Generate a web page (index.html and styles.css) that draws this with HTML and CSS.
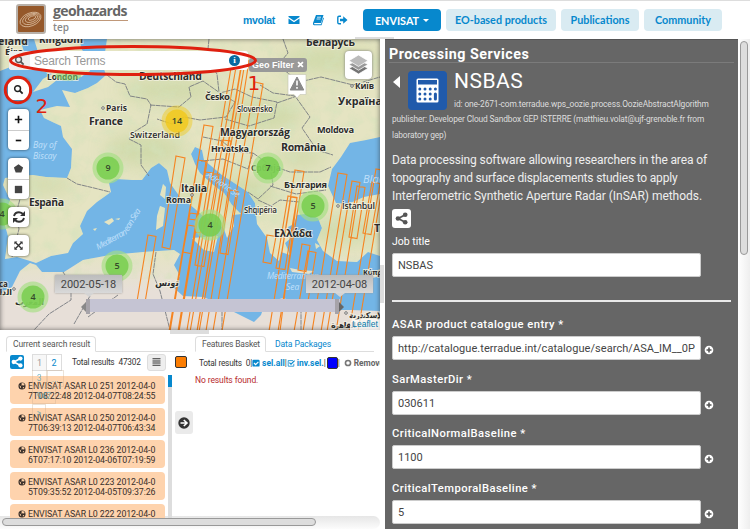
FILE: index.html
```html
<!DOCTYPE html>
<html lang="en">
<head>
<meta charset="utf-8">
<title>Geohazards TEP</title>
<link rel="stylesheet" href="styles.css">
</head>
<body>
<svg class="defs" width="0" height="0">
  <symbol id="plus" viewBox="0 0 12 12"><circle cx="6" cy="6" r="5.2" fill="#fff"/><path d="M6 3v6M3 6h6" stroke="#555" stroke-width="1.9"/></symbol>
  <symbol id="globe" viewBox="0 0 12 12"><circle cx="6" cy="6" r="5.3" fill="#3a302b"/><path d="M5.5 1.5l3 .4 1.6 2.5-1.5 1-2-.6-1.300 1zM2.200 5l2 1.500.6 2.800-1.600-1.200zM7.500 7.500l2 .2-1.400 2-1-.4z" fill="#fdd0a6"/></symbol>
  <symbol id="share" viewBox="0 0 14 14"><path d="M11 3L3.500 7l7.500 4" fill="none" stroke="currentColor" stroke-width="1.900"/><circle cx="11" cy="3" r="2.500" fill="currentColor"/><circle cx="3.200" cy="7" r="2.500" fill="currentColor"/><circle cx="11" cy="11" r="2.500" fill="currentColor"/></symbol>
  <symbol id="lens" viewBox="0 0 12 12"><circle cx="5" cy="5" r="3.200" fill="none" stroke="currentColor" stroke-width="1.600"/><path d="M7.300 7.300L10.500 10.500" stroke="currentColor" stroke-width="2"/></symbol>
</svg>

<header class="top">
  <div class="brand">
    <svg class="logo" viewBox="0 0 30 30"><rect x="1" y="1" width="28" height="28" rx="2" fill="#95582a" stroke="#b8b1aa" stroke-width="2"/><g fill="none" stroke="#e2c7ad" stroke-width=".7"><ellipse cx="14.500" cy="15.500" rx="11" ry="6.500" transform="rotate(-22 14.500 15.500)"/><ellipse cx="15" cy="15" rx="8.800" ry="4.900" transform="rotate(-22 15 15)"/><ellipse cx="15.500" cy="14.500" rx="6.500" ry="3.400" transform="rotate(-22 15.500 14.500)"/><ellipse cx="16" cy="14" rx="4" ry="1.800" transform="rotate(-22 16 14)"/></g></svg>
    <div class="brand-text"><span class="brand-name">geohazards</span><span class="brand-sub">tep</span></div>
  </div>
  <div class="user">
    <span class="user-name">mvolat</span>
    <svg viewBox="0 0 12 12"><path d="M.5 2h11v1L6 6.800.5 3zM.5 4.500L6 8.200l5.500-3.700V10H.5z" fill="#0788cd"/></svg>
    <svg viewBox="0 0 12 12"><path d="M4 1h7.500L9 9H2.500q-1 .8 0 1.200H9L11.300 3.500l.6.800L9.500 11.300H2Q.5 11 1 9z" fill="#0788cd"/><path d="M5 3.200h4M4.500 5h4" stroke="#fff" stroke-width=".8"/></svg>
    <svg viewBox="0 0 12 12"><path d="M5 2.200H3Q1.800 2.200 1.800 3.500v5Q1.800 9.800 3 9.800h2" fill="none" stroke="#0788cd" stroke-width="1.400"/><path d="M4 4.700h3.200V2.200L11.500 6 7.200 9.800V7.300H4z" fill="#0788cd"/></svg>
  </div>
  <nav class="nav">
    <a class="pill pill-on"><span>ENVISAT</span><i class="caret"></i></a>
    <a class="pill p2">EO-based products</a>
    <a class="pill p3">Publications</a>
    <a class="pill p4">Community</a>
  </nav>
  <i class="handle-top"></i>
</header>

<main class="main">
  <div class="left">
    <section class="map">
      <svg class="map-svg" viewBox="0 39 380 291">
        <defs>
          <filter id="relief" x="0" y="0" width="100%" height="100%"><feTurbulence type="fractalNoise" baseFrequency=".07" numOctaves="4" seed="8"/><feColorMatrix values="0 0 0 0 .66  0 0 0 0 .76  0 0 0 0 .50  2.400 0 0 0 -1.050"/><feComposite in2="SourceGraphic" operator="in"/></filter>
          <filter id="soft"><feGaussianBlur stdDeviation="9"/></filter>
          <clipPath id="land"><use href="#coast"/></clipPath>
          <linearGradient id="ground" gradientUnits="userSpaceOnUse" x1="0" y1="250" x2="0" y2="292"><stop offset="0" stop-color="#e5e4c2"/><stop offset="1" stop-color="#e7dfd8"/></linearGradient>
        </defs>
        <rect y="39" width="380" height="291" fill="#73b5e6"/>
        <path id="coast" fill="url(#ground)" d="M0 39H20L24 52 13 66 0 71ZM34 39H79L82 50 91 58 90 71 81 77 70 79 57 80 48 87 33 92 43 79 52 74 35 69 42 60 38 52ZM107 39H380V137L366 140 350 143 341 157 332 169 328 186 336 203 348 204 364 197 380 194V256L368 252 357 262 337 261 323 251 317 240 322 228 318 218 305 214 297 215 294 224 288 227 291 238 285 243 290 255 281 252 279 261 270 253 267 238 257 224 255 203 248 192 222 175 204 160 202 150 195 147 191 154 195 164 200 173 212 184 224 193 232 205 241 214 232 215 234 226 227 238 224 229 216 222 203 216 194 208 180 197 170 183 167 170 159 163 151 168 142 180 132 180 116 179 109 183 111 192 97 202 87 211 80 226 83 234 73 243 68 253 51 256 36 263 30 261 17 257 5 259 8 236 3 219 10 200 3 185 5 178 20 176 33 175 46 177 67 178 71 168 72 149 63 137 61 126 44 118 40 110 57 106 70 107 62 90 75 93 88 88 97 83 106 75 103 66ZM0 293L12 287 20 271 30 263 36 265 42 272 64 272 83 260 110 255 143 252 174 250 180 254 174 265 180 276 173 287 183 296 203 297 216 302 234 312 254 322 261 315 265 303 283 298 300 303 330 310 350 310 380 311V330H0ZM163 184L166 187 165 199 160 195ZM160 206L165 208 163 226 156 230 157 216ZM192 238L218 236 214 252 204 250ZM290 268L300 270 314 271 309 274 292 272ZM104 222L112 218 114 221 109 225ZM115 219L120 218 119 220ZM93 229L97 228 95 231ZM300 230L307 233 302 236ZM366 275L380 269V276L369 279ZM315 243L320 246 316 249Z"/>
        <g clip-path="url(#land)">
          <g filter="url(#soft)" fill="#c7d5a0" opacity=".7"><ellipse cx="145" cy="150" rx="40" ry="16"/><ellipse cx="258" cy="115" rx="45" ry="17"/><ellipse cx="245" cy="193" rx="30" ry="18"/><ellipse cx="40" cy="185" rx="35" ry="8"/><ellipse cx="300" cy="157" rx="25" ry="10"/><ellipse cx="345" cy="230" rx="40" ry="12"/><ellipse cx="170" cy="90" rx="50" ry="12"/><ellipse cx="330" cy="60" rx="50" ry="13"/><ellipse cx="190" cy="190" rx="8" ry="20"/></g>
          <rect y="39" width="380" height="240" filter="url(#relief)" opacity=".6"/>
        </g>
        <g fill="none" stroke="#777b80" stroke-width=".9" stroke-dasharray="5 .6">
          <path d="M107 75l9 7 9 2 5 12 17 3 4 6-4 19-13 8-5 7 12 6 0 20 8 11M67 178l10 6 17 4 16 4M13 186l10 2-3 11-4 15 3 15-7 28M150 105l29 2 12-10-2-10 14-6 17 12 15 9-9 15-26 3-16-3-12 7-15-5M220 93l15-4 17 8 25 5-3 16-25 8-24-7M209 39l-2 20 10 15 2 18M260 85l13 8 22 3 15 21-8 11 15 22 16 5M277 103l20-7M203 137l19 4 13 11 18 1-5 16-25-10-22 2M253 153l17 12 3 20-15 14-10-7M270 165l20 7 30 0 11-5M270 186l26 8 30-4M258 200l13 6 9-6 19 2M156 252l-3 22 7 17 10 39M63 272l8 12 0 16-22 14-15 16M90 296l-16 28M118 295l-30 22M222 300v30M301 303v27M283 39l5 14-10 12 21 17 22-5 32 8 27-8"/>
        </g>
        <g class="strips">
          <path d="M176 156l9 2-15 91-8-2zM148 235l8 1.500-11 66-8-1zM232 62l10 1-45 269-10-2zM236 67l8 1-45 264h-9zM242 60l7 1-43 270h-9zM255 82l8 2-41 247h-9zM204 125l9 1.500-34 205h-9zM198 160l8 1.500-28 170h-9zM210 173l9 1.500-15 92-9-1.500zM230 190l8 1.500-10 63-8-1.500zM295 170l9 1.500-26 160h-9zM288 196l9 1.500-12 72-9-1.500zM291 197l6 1-17 133h-11zM267 235l9 1.500-5 27-8-1.500zM302 244l8 1.500-4 26-8-1.500zM308 251l8 1.500-13 79h-9zM338 173l9 1.500-26 157h-9zM352 181l8 1.500-24 149h-9zM357 186l8 1.500-8 51-8-1.500zM372 182l8 1.500-9 51-8-1.500zM376 169l9 1.500-27 161h-9zM188 225l8 1.500-5 27-8-1.500zM190 213l7 1-1 6-7-1zM222 140l9 1-1 6-9-1zM205 172l8 1-10 60-8-1z"/>
        </g>
        <g class="lbl halo">
          <text x="-2" y="45" textLength="30" font-size="10.500">eland</text><text x="39" y="43" textLength="44" font-size="10">Kingdom</text>
          <text x="5" y="55" textLength="18" font-size="9.500">Éire</text>
          <text x="47" y="80" textLength="31" font-size="8.500">London</text>
          <text x="139" y="80" textLength="63" font-size="10.500">Deutschland</text>
          <text x="306" y="46" textLength="49" font-size="10.500">Беларусь</text>
          <text x="205" y="100" textLength="25" font-size="9.500">Česko</text>
          <text x="237" y="112" textLength="36" font-size="8" class="thin">Slovensko</text>
          <text x="106" y="111" textLength="21" font-size="8.500">Paris</text>
          <text x="89" y="125" textLength="34" font-size="10.500">France</text>
          <text x="130" y="138" textLength="50" font-size="9" class="thin">Switzerland</text>
          <text x="355" y="89" textLength="19" font-size="8.500">Київ</text>
          <text x="338" y="105" textLength="44" font-size="10.800">Україна</text>
          <text x="220" y="136" textLength="70" font-size="10.500">Magyarország</text>
          <text x="317" y="133" textLength="37" font-size="9.300">Moldova</text>
          <text x="211" y="152" textLength="38" font-size="9">Hrvatska</text>
          <text x="281" y="151" textLength="45" font-size="10.800">România</text>
          <text x="251" y="171" textLength="30" font-size="8.500">Србија</text>
          <text x="284" y="188" textLength="43" font-size="9.300">България</text>
          <text x="181" y="192" textLength="26" font-size="10.500">Italia</text>
          <text x="166" y="203" textLength="25" font-size="8.800">Roma</text>
          <text x="29" y="206" textLength="35" font-size="10.500">España</text>
          <text x="244" y="213" textLength="33" font-size="8" class="thin">Shqipëria</text>
          <text x="342" y="209" textLength="33" font-size="9" class="thin">İstanbul</text>
          <text x="274" y="237" textLength="38" font-size="10.800">Ελλάδα</text>
          <text x="374" y="232" font-size="11">Türkiye</text>
          <text x="363" y="275" textLength="27" font-size="7.500">Κύπρος</text>
          <text x="155" y="286" textLength="24" font-size="9">تونس</text>
          <text x="15" y="305" textLength="29" font-size="9">المغرب</text>
          <text x="-1" y="287" font-size="8">ca</text><text x="-5" y="295" font-size="8" textLength="17">الدار</text>
          <text x="349" y="318" textLength="36" font-size="8">الإسكندرية</text>
          <text x="331" y="328" textLength="25" font-size="8">القاهرة</text>
        </g>
        <g class="sea"><text x="33" y="148">Bay of</text><text x="33" y="159">Biscay</text><text transform="translate(98 250) rotate(-29)" textLength="34">Mediterran</text><text transform="translate(128 232) rotate(-59)" textLength="25">ean Sea</text><text transform="translate(206 176) rotate(35)" textLength="38">Adriatic Se</text><text x="267" y="279" textLength="52">Mediterranean</text><text x="286" y="290">Sea</text><text x="363" y="183" class="black">Black</text></g>
        <g fill="#fff" stroke="#555" stroke-width=".8"><circle cx="103" cy="108" r="1.300"/><circle cx="352" cy="86" r="1.300"/><circle cx="338" cy="206" r="1.300"/><circle cx="14" cy="289" r="1.300"/><circle cx="346" cy="313" r="1.300"/><circle cx="192" cy="195" r="1.300"/></g>
        <ellipse cx="68" cy="76" rx="13" ry="4.500" fill="#87db6d" opacity=".55"/>
        <g class="cluster"><circle class="halo-c" cx="108" cy="168" r="15.500"/><circle cx="108" cy="168" r="11.500"/><circle class="halo-c" cx="117" cy="266" r="15.500"/><circle cx="117" cy="266" r="11.500"/><circle class="halo-c" cx="33" cy="297" r="15.500"/><circle cx="33" cy="297" r="11.500"/><circle class="halo-c" cx="2" cy="214" r="15.500"/><circle cx="2" cy="214" r="11.500"/><circle class="halo-c" cx="210" cy="225" r="15.500"/><circle cx="210" cy="225" r="11.500"/><circle class="halo-c" cx="268" cy="168" r="15.500"/><circle cx="268" cy="168" r="11.500"/><circle class="halo-c" cx="313" cy="206" r="15.500"/><circle cx="313" cy="206" r="11.500"/>
          <g fill="#f1c91f"><circle cx="177" cy="121" r="15.500" opacity=".55"/><circle cx="177" cy="121" r="11.500"/></g></g>
        <g class="count"><text x="108" y="171">9</text><text x="117" y="269">5</text><text x="33" y="300">4</text><text x="2" y="217">4</text><text x="210" y="228">4</text><text x="268" y="171">7</text><text x="313" y="209">5</text><text x="177" y="124">14</text></g>
      </svg>
      <i class="shade"></i>

      <div class="search"><span class="search-icon"><svg viewBox="0 0 12 12"><use href="#lens"/></svg></span><span class="search-text">Search Terms</span><span class="search-info"><b>i</b></span></div>
      <span class="geo">Geo Filter <svg viewBox="0 0 8 8"><path d="M1.200 1.200l5.600 5.600M6.800 1.200L1.200 6.800" stroke="#fff" stroke-width="2"/></svg></span>
      <div class="layers"><svg viewBox="0 0 22 22"><g stroke="#fff" stroke-width=".8"><path d="M1 15l10-5 10 5-10 6z" fill="#747474"/><path d="M1 11l10-5 10 5-10 6z" fill="#999"/><path d="M1 7l10-6 10 6-10 6z" fill="#bbb"/></g></svg></div>
      <svg class="warn" viewBox="0 0 20 25"><path d="M1 .5h18v20h-6l-3 3.500-3-3.500H1z" fill="#fff" stroke="#c4c4b4" stroke-width=".6"/><path d="M10 3L16.800 16H3.200z" fill="#888" stroke="#888" stroke-width="1" stroke-linejoin="round"/><path d="M10 6.500v5M10 13v1.800" stroke="#fff" stroke-width="1.600"/></svg>

      <div class="tools">
        <div class="tool-set"><span><svg viewBox="0 0 12 12"><use href="#lens"/></svg></span></div>
        <div class="tool-set"><span><svg viewBox="0 0 12 12"><path d="M6 2v8M2 6h8" stroke="#111" stroke-width="1.800"/></svg></span><span><svg viewBox="0 0 12 12"><path d="M3 6h6" stroke="#111" stroke-width="1.800"/></svg></span></div>
        <div class="tool-set"><span><svg viewBox="0 0 12 12"><path d="M6 1.300l5 3.600-1.900 5.400H2.900L1 4.900z" fill="#444"/></svg></span><span><svg viewBox="0 0 12 12"><path d="M2 2h8v8H2z" fill="#444"/></svg></span></div>
        <div class="tool-set"><span><svg class="big" viewBox="0 0 14 14"><g fill="none" stroke="#333" stroke-width="1.900"><path d="M2 6Q3 2.300 7 2.300 9.500 2.300 11.500 4.500M12 8Q11 11.700 7 11.700 4.500 11.700 2.500 9.500"/></g><path d="M13 1v5H8zM1 13V8h5z" fill="#333"/></svg></span></div>
        <div class="tool-set"><span><svg viewBox="0 0 12 12"><path d="M3 3l6 6M9 3L3 9" stroke="#333" stroke-width="1.500"/><path d="M1.500 1.500h3.300L1.500 4.800zM10.500 1.500v3.300L7.200 1.500zM1.500 10.500V7.200l3.300 3.300zM10.500 10.500H7.200l3.300-3.300z" fill="#333"/></svg></span></div>
      </div>

      <div class="timeline"><i class="bar"></i><i class="grip gl"></i><i class="grip gr"></i></div>
      <span class="date d1">2002-05-18</span>
      <span class="date d2">2012-04-08</span>
      <span class="leaflet">Leaflet</span>

      <svg class="marks" viewBox="0 39 380 291"><g fill="none" stroke="#df200f"><ellipse cx="133" cy="60.500" rx="122.500" ry="14" stroke-width="3"/><circle cx="18" cy="90" r="12.700" stroke-width="3"/></g><g fill="#df200f" font-family="DejaVu Sans" font-size="20"><text x="247.500" y="90">1</text><text x="35.500" y="113">2</text></g></svg>
    </section>

    <section class="bottom">
      <i class="handle-mid"></i>
      <div class="cols">
        <div class="results">
          <div class="tabs"><span class="tab">Current search result</span></div>
          <div class="bar-row">
            <span class="share-btn"><svg viewBox="0 0 14 14"><use href="#share"/></svg></span>
            <div class="pages"><span class="off">1</span><span>2</span></div>
            <span class="total">Total results&nbsp; 47302</span>
            <span class="list-btn"><svg viewBox="0 0 10 10"><path d="M0 1h10M0 3.700h10M0 6.300h10M0 9h10" stroke="#333" stroke-width="1.400"/></svg></span>
          </div>
          <div class="list-wrap">
            <ul class="list">
              <li><svg viewBox="0 0 12 12"><use href="#globe"/></svg><span>ENVISAT ASAR L0 251 2012-04-0</span><span class="second">7T08:22:48 2012-04-07T08:24:55</span></li>
              <li><svg viewBox="0 0 12 12"><use href="#globe"/></svg><span>ENVISAT ASAR L0 250 2012-04-0</span><span class="second">7T06:39:13 2012-04-07T06:43:34</span></li>
              <li><svg viewBox="0 0 12 12"><use href="#globe"/></svg><span>ENVISAT ASAR L0 236 2012-04-0</span><span class="second">6T07:17:10 2012-04-06T07:19:59</span></li>
              <li><svg viewBox="0 0 12 12"><use href="#globe"/></svg><span>ENVISAT ASAR L0 223 2012-04-0</span><span class="second">5T09:35:52 2012-04-05T09:37:26</span></li>
              <li><svg viewBox="0 0 12 12"><use href="#globe"/></svg><span>ENVISAT ASAR L0 222 2012-04-0</span></li>
            </ul>
            <i class="list-scroll"></i>
          </div>
          <div class="pages-over"><span class="g1">3</span><span class="g2">...</span><span class="g3">947</span><span class="g4">&gt;</span></div>
        </div>
        <div class="move"><i class="swatch orange"></i><span class="move-btn"><svg viewBox="0 0 12 12"><circle cx="6" cy="6" r="5.700" fill="#333"/><path d="M2.500 6h6M5.800 3L9 6 5.800 9" fill="none" stroke="#fff" stroke-width="1.600"/></svg></span></div>
        <div class="basket">
          <div class="tabs"><span class="tab">Features Basket</span><span class="tab-link">Data Packages</span></div>
          <div class="basket-row"><span class="b-total">Total results&nbsp; 0|</span><svg viewBox="0 0 10 10"><rect x=".5" y="1" width="9" height="8.500" rx="1.500" fill="#0788cd"/><path d="M2.500 5l2 2 3.500-3.500" fill="none" stroke="#fff" stroke-width="1.500"/></svg><b class="b-sel">sel.all</b><span class="b-bar">|</span><svg viewBox="0 0 10 10"><path d="M8.500 6v3h-7V2h6" fill="none" stroke="#0788cd"/><path d="M3 4.500l2 2L9.500 2" fill="none" stroke="#0788cd" stroke-width="1.500"/></svg><b class="b-inv">inv.sel.</b><span class="b-bar b-bar2">|</span><i class="swatch blue"></i><span class="b-bar3">|</span><svg class="rm" viewBox="0 0 10 10"><circle cx="5" cy="5" r="3.200" fill="none" stroke="#777" stroke-width="2"/></svg><b class="b-rem">Remove</b></div>
          <p class="none">No results found.</p>
        </div>
      </div>
      <div class="hscroll"><i></i></div>
    </section>
  </div>

  <div class="gutter"><i></i></div>

  <section class="panel">
    <h2>Processing Services</h2>
    <div class="svc">
      <i class="back"></i>
      <svg class="calc" viewBox="0 0 39 39"><rect width="39" height="39" rx="4" fill="#205aab"/><rect x="8.500" y="7.500" width="22" height="24" rx="1.500" fill="#fff"/><rect x="10" y="9" width="19" height="4.500" fill="#205aab"/><g stroke="#205aab" stroke-width="3" stroke-linecap="round" stroke-dasharray="0 5.200" fill="none"><path d="M11.800 18h16M11.800 23h11M11.800 28h11"/></g><path d="M27.400 23v5" stroke="#205aab" stroke-width="3" stroke-linecap="round"/></svg>
      <div class="svc-text"><h1>NSBAS</h1><p class="id">id: one-2671-com.terradue.wps_oozie.process.OozieAbstractAlgorithm</p></div>
    </div>
    <p class="pub"><span>publisher: Developer Cloud Sandbox GEP ISTERRE (matthieu.volat@ujf-grenoble.fr from</span><br><span>laboratory gep)</span></p>
    <p class="desc"><span class="l1">Data processing software allowing researchers in the area of</span><br><span class="l2">topography and surface displacements studies to apply</span><br><span class="l3">Interferometric Synthetic Aperture Radar (InSAR) methods.</span></p>
    <span class="share-white"><svg viewBox="0 0 14 14"><use href="#share"/></svg></span>
    <div class="job"><label>Job title</label><div class="field">NSBAS</div></div>
    <hr>
    <div class="group"><label>ASAR product catalogue entry *</label><div class="line"><div class="field url">http://catalogue.terradue.int/catalogue/search/ASA_IM__0P</div><svg viewBox="0 0 12 12"><use href="#plus"/></svg></div></div>
    <div class="group"><label>SarMasterDir *</label><div class="line"><div class="field">030611</div><svg viewBox="0 0 12 12"><use href="#plus"/></svg></div></div>
    <div class="group"><label>CriticalNormalBaseline *</label><div class="line"><div class="field">1100</div><svg viewBox="0 0 12 12"><use href="#plus"/></svg></div></div>
    <div class="group"><label>CriticalTemporalBaseline *</label><div class="line"><div class="field">5</div><svg viewBox="0 0 12 12"><use href="#plus"/></svg></div></div>
  </section>
  <div class="vscroll"><i></i></div>
</main>
</body>
</html>
```
FILE: styles.css
```css
* { box-sizing: border-box; }
body { margin: 0; width: 750px; height: 529px; overflow: hidden; display: flex; flex-direction: column; background: #fff; font-family: Roboto, "Liberation Sans", sans-serif; font-size: 10px; color: #333; }
h1, h2, p, ul { margin: 0; padding: 0; }
i { display: block; }
span, a, b, label { white-space: nowrap; }
.defs { position: absolute; }

.top { position: relative; height: 39px; flex: none; border-top: 1px solid #ddd; display: flex; }
.brand { display: flex; padding: 3px 0 0 16px; width: 243px; gap: 7px; }
.logo { width: 30px; height: 30px; }
.brand-text { display: flex; flex-direction: column; font-family: "Open Sans", sans-serif; }
.brand-name { font-size: 14px; line-height: 14px; height: 17px; width: 75px; font-weight: 700; color: #666; border-bottom: 1px solid #c09879; letter-spacing: -.6px; }
.brand-sub { font-size: 10px; line-height: 13px; font-weight: 600; color: #888; }
.user { display: flex; align-items: center; width: 120px; }
.user svg { width: 12px; height: 12px; margin-right: 12px; flex: none; }
.user-name { font: 700 10.5px "Liberation Sans", sans-serif; color: #0788cd; width: 45px; letter-spacing: -.3px; }
.nav { display: flex; gap: 5px; padding-top: 8px; }
.pill { height: 22px; border-radius: 4px; background: #d9ebf2; color: #0788cd; font: 700 10.8px/21px Lato, sans-serif; text-align: center; width: 110px; }
.pill-on { background: #0788cd; color: #fff; width: 78px; display: flex; align-items: center; justify-content: center; gap: 4px; }
.p3 { width: 78px; } .p4 { width: 78px; }
.caret { border: 3px solid transparent; border-top-color: #fff; border-bottom: 0; }
.handle-top { position: absolute; left: 355px; top: 36px; width: 39px; height: 2px; background: #ddd; }

.main { display: flex; flex: 1; min-height: 0; }
.left { width: 380px; display: flex; flex-direction: column; }
.map { position: relative; height: 291px; flex: none; overflow: hidden; }
.map-svg { display: block; width: 380px; height: 291px; }
.shade { position: absolute; inset: 0; box-shadow: inset 0 0 5px rgba(40,40,40,.65); }
.strips { fill: none; stroke: #f58421; stroke-width: 1.1; }
.lbl { font-family: "Open Sans", "Noto Sans", "DejaVu Sans", sans-serif; font-weight: 700; fill: #2c2c2c; stroke: #f5f4e5; stroke-width: 1.8px; paint-order: stroke; stroke-opacity: .75; }
.thin { font-weight: 600; }
.sea { font: italic 8.5px "Open Sans", sans-serif; fill: #c1e0fb; }
.black { font-size: 11px; }
.cluster { fill: #78ce4e; fill-opacity: .85; }
.halo-c { fill: #a4df83; fill-opacity: .65; }
.count { font: 600 9px "Open Sans", sans-serif; fill: #354a2b; text-anchor: middle; }
.search { position: absolute; left: 9px; top: 12px; width: 239px; height: 19px; background: #fff; border-radius: 3px; display: flex; align-items: center; }
.search-icon { width: 21px; height: 19px; background: #eee; display: flex; align-items: center; justify-content: center; color: #555; border-radius: 3px 0 0 3px; }
.search-icon svg { width: 11px; }
.search-text { padding-left: 4px; width: 190px; font: 12px "Liberation Sans", sans-serif; color: #999; letter-spacing: -.2px; }
.search-info { width: 28px; height: 19px; padding: 4px 0 0 9px; }
.search-info b { display: block; width: 11px; height: 11px; border-radius: 50%; background: #07699f; color: #fff; font: 700 9px/11px "Liberation Serif", serif; text-align: center; }
.geo { position: absolute; left: 249px; top: 19px; width: 58px; height: 14px; border-radius: 3px; background: #999; color: #fff; font: 700 9px/14px "Liberation Sans", sans-serif; padding-left: 3px; }
.geo svg { width: 7px; height: 7px; }
.layers { position: absolute; left: 345px; top: 12px; width: 27px; height: 28px; background: #fff; border-radius: 4px; box-shadow: 0 0 3px #777; padding: 3px; }
.layers svg { width: 21px; }
.warn { position: absolute; left: 287px; top: 35px; width: 20px; height: 25px; }
.tools { position: absolute; left: 8px; top: 40px; display: flex; flex-direction: column; gap: 7.800px; }
.tool-set { width: 21px; background: #fff; border-radius: 4px; box-shadow: 0 0 3px rgba(0,0,0,.65); color: #222; }
.tool-set span { height: 20.5px; display: flex; align-items: center; justify-content: center; }
.tool-set span + span { border-top: 1px solid #ccc; }
.tool-set svg { width: 11px; height: 11px; }
.tool-set .big { width: 14px; height: 14px; }
.tool-set:first-child { margin-bottom: 2px; }
.timeline { position: absolute; left: 81px; top: 260px; width: 264px; height: 14px; }
.bar { margin: 0 5px; height: 13px; background: #c5c4d3; }
.grip { position: absolute; top: 0; width: 4px; height: 15px; background: #a6a3a9; }
.gl { left: 5px; } .gr { right: 6px; }
.gl::before, .gr::after { content: ""; position: absolute; top: 3px; border: 5px solid transparent; }
.gl::before { right: 4px; border-right-color: #888; border-left: 0; }
.gr::after { left: 4px; border-left-color: #666; border-right: 0; }
.date { position: absolute; height: 18px; width: 67px; text-align: center; background: linear-gradient(#bcbcbc, #d9d9d9); color: #444; font-size: 11px; line-height: 19px; letter-spacing: 0; box-shadow: 0 0 2px #999; }
.date::after { content: ""; position: absolute; top: 18px; left: 29px; border: 5px solid transparent; border-top: 4px solid #d4d4d4; border-bottom: 0; }
.d1 { left: 55px; top: 236px; } .d2 { left: 306px; top: 236px; }
.leaflet { position: absolute; right: 0; bottom: 0; width: 30px; height: 11px; font: 8.500px/11px "Liberation Sans", sans-serif; text-align: center; background: rgba(255,255,255,.7); color: #0078a8; }
.marks { position: absolute; inset: 0; width: 380px; height: 291px; }

.bottom { flex: 1; min-height: 0; display: flex; flex-direction: column; position: relative; }
.handle-mid { position: absolute; left: 170px; top: 0; width: 39px; height: 4px; background: #ddd; }
.cols { display: flex; height: 186px; flex: none; padding-top: 6px; }
.results { width: 173px; padding-left: 6px; position: relative; }
.tabs { display: flex; height: 16px; border-bottom: 1px solid #ddd; width: 179px; }
.tab { height: 16px; border: 1px solid #ddd; border-bottom-color: #fff; border-radius: 4px 4px 0 0; padding: 0 6px; font-size: 8.500px; line-height: 14px; color: #555; letter-spacing: -.08px; }
.results .tab { width: 90px; }
.bar-row { display: flex; height: 24px; align-items: center; padding-left: 4px; width: 180px; margin-top: -2px; }
.share-btn { width: 14px; height: 14px; border-radius: 2px; background: #0788cd; color: #fff; padding: 1px; display: flex; margin-right: 8px; }
.pages { display: flex; width: 40px; }
.pages span { width: 15px; height: 17px; border: 1px solid #ddd; font-size: 9px; line-height: 16px; text-align: center; color: #0788cd; }
.pages span + span { border-left: 0; }
.pages .off { color: #999; background: #f7f7f7; }
.total { width: 75px; font-size: 8.300px; letter-spacing: -.27px; word-spacing: .3px; }
.list-btn { width: 19px; height: 17px; border-radius: 3px; border: 1px solid #ddd; background: #eee; display: flex; align-items: center; justify-content: center; }
.list-btn svg { width: 9px; height: 8px; }
.list-wrap { display: flex; gap: 3px; height: 143px; padding-left: 4px; overflow: hidden; margin-top: 1px; }
.list { list-style: none; width: 155px; padding-top: 1px; }
.list li { height: 28px; margin-bottom: 4px; border-radius: 4px; background: #fed3ad; padding: 4.500px 0 0 8px; font-size: 8.800px; line-height: 10.500px; color: #3a302b; display: grid; grid-template-columns: 10px auto; justify-content: start; align-content: start; }
.list li svg { width: 8px; height: 8px; margin-top: 1px; }
.list span { letter-spacing: -.08px; }
.list .second { grid-column: 2; }
.list-scroll { width: 4px; height: 144px; background: linear-gradient(#0788cd 12px, #ddd 12px); }
.pages-over { position: absolute; left: 32px; top: 34px; width: 32px; height: 60px; color: #4c9fb6; font-size: 8.500px; opacity: .75; }
.pages-over span { position: absolute; border: 1px solid rgba(200,170,140,.45); height: 17px; line-height: 16px; padding: 0 4px; }
.g1 { left: 0; top: 0; border-top: 0 !important; } .g2 { left: 15px; top: 0; } .g3 { left: 0; top: 17px; width: 24px; } .g4 { left: 0; top: 34px; }
.move { width: 22px; position: relative; padding: 20px 0 0 2px; }
.swatch { width: 12px; height: 12px; border: 1px solid #333; border-radius: 2px; }
.orange { background: #fb7d02; }
.move-btn { display: flex; width: 18px; height: 23px; border-radius: 3px; background: #eaeaea; margin-top: 43px; align-items: center; justify-content: center; }
.move-btn svg { width: 12px; height: 12px; }
.basket { width: 185px; overflow: hidden; }
.basket .tab { width: 71px; letter-spacing: -.2px; }
.tab-link { font-size: 8.600px; line-height: 16px; color: #0788cd; padding-left: 9px; letter-spacing: -.1px; }
.basket-row { display: flex; align-items: center; height: 21px; padding-left: 4px; font-size: 8.300px; }
.basket-row svg { width: 8px; height: 8px; flex: none; }
.b-total { width: 56px; letter-spacing: -.23px; word-spacing: .2px; }
.b-sel, .b-inv { color: #0788cd; font-size: 8.5px; padding-left: 2px; }
.b-sel { width: 27px; } .b-inv { width: 34px; }
.b-bar { width: 4px; } .b-bar2 { width: 2px; margin-right: 1px; }
.swatch.blue { background: #00f; flex: none; width: 11px; }
.rm { margin: 0 2px 0 4px; }
.b-rem { color: #666; }
.none { color: #b82a2d; font-size: 8.500px; line-height: 15px; letter-spacing: -.1px; }
.hscroll { height: 13px; background: linear-gradient(#e6e6e6, #fcfcfc); border-radius: 0 8px 8px 0; padding: 2px; }
.hscroll i { width: 314px; height: 8px; border: 1px solid #999; border-radius: 4px; background: #ddd; }

.gutter { width: 5px; background: #fff; padding-top: 226px; }
.gutter i { width: 4px; height: 38px; background: #ddd; }
.panel { width: 353px; background: #666; color: #fff; padding: 6px 4px 0 7px; border-top: 1px solid #555; overflow: hidden; }
.panel h2 { margin-left: -3px; height: 17px; font-size: 14.300px; line-height: 17px; font-weight: 700; letter-spacing: .48px; border-bottom: 1px solid #7b7b7b; }
.svc { display: flex; height: 48px; padding-top: 8px; }
.back { border: 6px solid transparent; border-left: 0; border-right: 7px solid #fff; margin: 5px 9px 0 1px; height: 12px; }
.calc { width: 39px; height: 39px; margin-right: 7px; flex: none; margin-left: -1px; }
.svc-text h1 { font-size: 21px; line-height: 21px; font-weight: 400; letter-spacing: .5px; }
.id, .pub { font-size: 8.400px; color: #ddd; line-height: 16px; letter-spacing: -.12px; }
.id { margin-top: 4px; white-space: nowrap; }
.pub { letter-spacing: -.14px; }
.desc { margin-top: 8px; font-size: 12px; line-height: 18px; color: #eee; }
.l1 { letter-spacing: -.13px; }
.l2 { letter-spacing: -.18px; }
.l3 { letter-spacing: -.04px; }
.share-white { width: 19px; height: 19px; border-radius: 3px; background: #fff; color: #555; display: flex; padding: 3px; margin-top: 4px; }
.panel label { display: block; font-size: 10.500px; line-height: 14px; height: 18px; }
.job { margin-top: 7px; }
.field { width: 309px; height: 24px; border-radius: 2px; background: #fff; color: #444; border: 1px solid #ccc; padding-left: 5px; font-size: 11px; line-height: 23px; white-space: nowrap; }
.url { letter-spacing: .06px; }
.panel hr { border: 0; border-top: 2px solid #e9e9e9; margin: 23px 3px 15px 0; height: 2px; }
.group { height: 54.500px; }
.panel .group label { font-size: 11.200px; font-weight: 500; height: 19px; padding-top: 1px; letter-spacing: .45px; }
.line { display: flex; gap: 3px; }
.line svg { width: 10px; height: 10px; margin-top: 9px; }
.vscroll { width: 12px; padding: 2px 0 0 2px; background: linear-gradient(90deg, #fff, #eee); }
.vscroll i { width: 8px; height: 214px; border: 1px solid #999; border-radius: 4px; background: #ddd; }
```
